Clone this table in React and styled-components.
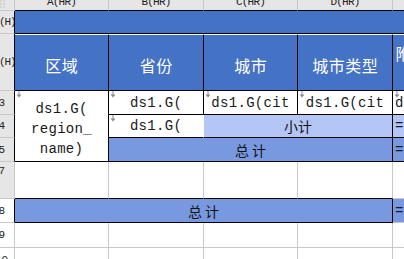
import styled, { createGlobalStyle } from 'styled-components';

const HEAD = '#4472c4';
const SUB = '#b4c6f6';
const TOTAL = '#7899df';
const GRID = '#c8c8c8';
const LINE = '#000';
const RULER = '#e6e6e6';

const GlobalStyle = createGlobalStyle`
  html, body { margin: 0; padding: 0; background: #fff; overflow: hidden; }
`;

const Sheet = styled.div`
  display: grid;
  grid-template-columns: 15px 94px 95px 94px 95px 94px;
  grid-template-rows: 11px 23px 57px 24px 23px 24px 37px 24px 25px 24px;
  width: 404px;
  height: 259px;
  overflow: hidden;
  font-family: "Liberation Mono", monospace;
`;

const Corner = styled.div`
  box-sizing: border-box;
  background: ${RULER};
  border-right: 1px solid ${GRID};
  border-bottom: 1px solid ${GRID};
  display: flex;
  align-items: flex-start;
`;

const CornerDots = styled.svg`
  width: 6px;
  height: 9px;
`;

const ColHead = styled.div`
  box-sizing: border-box;
  background: ${RULER};
  border-right: 1px solid ${GRID};
  border-bottom: 1px solid ${LINE};
  overflow: hidden;
  display: flex;
  justify-content: center;
  align-items: flex-start;
  font-size: 11px;
  line-height: 11px;
  letter-spacing: -0.8px;
  color: #222;
  white-space: nowrap;

  span { margin-top: -3px; }
`;

const RowHead = styled.div`
  box-sizing: border-box;
  background: ${p => (p.$light ? '#fff' : RULER)};
  border-right: 1px solid ${p => p.$edge || GRID};
  border-bottom: 1px solid ${GRID};
  overflow: hidden;
  display: flex;
  align-items: ${p => (p.$top ? 'flex-start' : 'center')};
  padding-top: ${p => p.$top || 0}px;
  font-size: 11px;
  letter-spacing: -0.6px;
  color: #222;
`;

// labels sit centred on a ruler that is scrolled mostly out of view
const RowLabel = styled.span`
  flex: none;
  width: 40px;
  margin-left: ${p => (p.$h ? '-15.5px' : '-18.5px')};
  letter-spacing: ${p => (p.$h ? '-1px' : '-0.6px')};
  text-align: center;
  white-space: nowrap;
`;

const Cell = styled.div`
  position: relative;
  box-sizing: border-box;
  grid-column: span ${p => p.$span || 1};
  grid-row: span ${p => p.$rows || 1};
  background: ${p => p.$bg || '#fff'};
  border-right: 1px solid ${p => p.$r || GRID};
  border-bottom: 1px solid ${p => p.$b || GRID};
  border-top: ${p => (p.$t ? `1px solid ${p.$t}` : 'none')};
  overflow: hidden;
  display: flex;
  align-items: center;
  justify-content: ${p => (p.$left ? 'flex-start' : 'center')};
  padding-left: ${p => (p.$left ? '2px' : '0')};
  white-space: nowrap;
`;

const Title = styled.span`
  font-family: "Noto Sans CJK SC", sans-serif;
  font-size: 16px;
  letter-spacing: 0.5px;
  padding-left: 0.5px;
  color: #fff;
  margin-top: 4px;
`;

const Peek = styled(Title)`
  align-self: flex-start;
  margin-top: 9px;
  line-height: 18px;
`;

const Field = styled.span`
  font-family: "Liberation Mono", monospace;
  font-size: 14px;
  letter-spacing: 0.3px;
  line-height: 20px;
  color: #1a1a1a;
  text-align: center;
  padding-top: ${p => p.$pad || 0}px;
`;

const Sum = styled.span`
  font-family: "Noto Sans CJK SC", sans-serif;
  font-size: 14px;
  color: #111;
  letter-spacing: ${p => (p.$wide ? '3px' : '0')};
  padding-left: ${p => (p.$wide ? '3px' : '0')};
`;

const Mark = styled.svg`
  position: absolute;
  left: 1px;
  top: 0;
  width: 6px;
  height: 7px;
`;

const Arrow = () => (
  <Mark viewBox="0 0 6 7">
    <path d="M3 0V5" stroke="#8a8a8a" strokeWidth="1" />
    <path d="M0.5 3.5L3 6.5L5.5 3.5Z" fill="#8a8a8a" />
  </Mark>
);

const cols = ['A(HR)', 'B(HR)', 'C(HR)', 'D(HR)', 'E(HR)'];
const titles = ['区域', '省份', '城市', '城市类型'];

const Blank = ({ b }) => <Cell $r={GRID} $b={b || GRID} />;

export default function App() {
  return (
    <>
      <GlobalStyle />
      <Sheet>
        <Corner>
          <CornerDots viewBox="0 0 6 9">
            {[1, 4].map(x =>
              [1, 4, 7].map(y => (
                <rect key={`${x}-${y}`} x={x - 0.5} y={y - 0.5} width="1" height="1" fill="#9a9a9a" />
              ))
            )}
          </CornerDots>
        </Corner>
        {cols.map(c => (
          <ColHead key={c}><span>{c}</span></ColHead>
        ))}

        <RowHead $edge={LINE}><RowLabel $h>1(H)</RowLabel></RowHead>
        <Cell $span={5} $bg={HEAD} $r={HEAD} $b={LINE} />

        <RowHead $edge={LINE}><RowLabel $h>2(H)</RowLabel></RowHead>
        {titles.map(t => (
          <Cell key={t} $bg={HEAD} $r={LINE} $b={LINE} $t="#fff">
            <Title>{t}</Title>
          </Cell>
        ))}
        <Cell $bg={HEAD} $r={LINE} $b={LINE} $t="#fff" $left>
          <Peek>附加</Peek>
        </Cell>

        <RowHead $edge={LINE}><RowLabel>3</RowLabel></RowHead>
        <Cell $rows={3} $r={LINE} $b={LINE}>
          <Arrow />
          <Field $pad={5}>ds1.G(<br />region_<br />name)</Field>
        </Cell>
        <Cell $r={LINE} $b={LINE}><Arrow /><Field>ds1.G(</Field></Cell>
        <Cell $r={LINE} $b={LINE}><Arrow /><Field>ds1.G(cit</Field></Cell>
        <Cell $r={LINE} $b={LINE}><Arrow /><Field>ds1.G(cit</Field></Cell>
        <Cell $r={GRID} $b={LINE} $left><Arrow /><Field>ds1.G(</Field></Cell>

        <RowHead $edge={LINE}><RowLabel>4</RowLabel></RowHead>
        <Cell $r="#fff" $b={LINE}><Arrow /><Field>ds1.G(</Field></Cell>
        <Cell $span={2} $bg={SUB} $r={LINE} $b={LINE}><Sum>小计</Sum></Cell>
        <Cell $bg={SUB} $r={GRID} $b={LINE} $left><Field>=</Field></Cell>

        <RowHead $edge={LINE}><RowLabel>5</RowLabel></RowHead>
        <Cell $span={3} $bg={TOTAL} $r={LINE} $b={LINE}><Sum $wide>总计</Sum></Cell>
        <Cell $bg={TOTAL} $r={GRID} $b={LINE} $left><Field>=</Field></Cell>

        <RowHead $top={3}><RowLabel>7</RowLabel></RowHead>
        <Blank b={LINE} />
        <Blank b={LINE} />
        <Blank b={LINE} />
        <Blank b={LINE} />
        <Blank />

        <RowHead $light $edge={LINE}><RowLabel>8</RowLabel></RowHead>
        <Cell $span={4} $bg={TOTAL} $r={LINE} $b={LINE}><Sum $wide>总计</Sum></Cell>
        <Cell $bg={TOTAL} $r={GRID} $b={GRID} $left><Field>=</Field></Cell>

        <RowHead $light><RowLabel>9</RowLabel></RowHead>
        <Blank /><Blank /><Blank /><Blank /><Blank />

        <RowHead $light><RowLabel>10</RowLabel></RowHead>
        <Blank /><Blank /><Blank /><Blank /><Blank />
      </Sheet>
    </>
  );
}
